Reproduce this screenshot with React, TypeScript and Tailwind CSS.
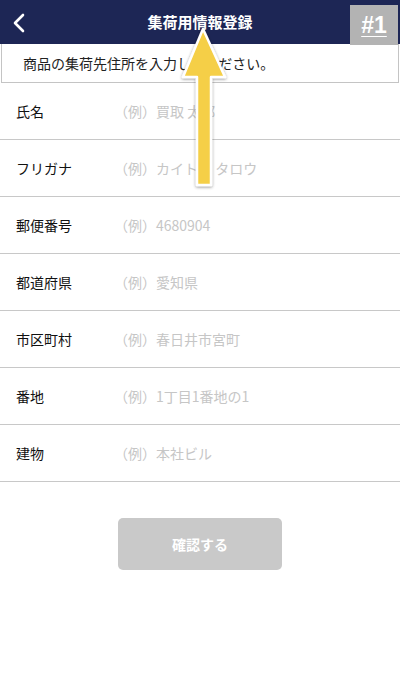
import React from 'react';

const FIELDS: { label: string; placeholder: string }[] = [
  { label: '氏名', placeholder: '（例）買取 太郎' },
  { label: 'フリガナ', placeholder: '（例）カイトリ タロウ' },
  { label: '郵便番号', placeholder: '（例）4680904' },
  { label: '都道府県', placeholder: '（例）愛知県' },
  { label: '市区町村', placeholder: '（例）春日井市宮町' },
  { label: '番地', placeholder: '（例）1丁目1番地の1' },
  { label: '建物', placeholder: '（例）本社ビル' },
];

const font = '"Noto Sans CJK JP", "Liberation Sans", sans-serif';

export default function App() {
  return (
    <div className="relative h-[694px] w-[400px] overflow-hidden bg-white" style={{ fontFamily: font }}>
      {/* Header */}
      <div className="relative flex h-[44px] items-center justify-center bg-[#1d2655]">
        <svg className="absolute left-[12px] top-[13px]" width="14" height="20" viewBox="0 0 14 20">
          <path d="M11 2 L3 10 L11 18" fill="none" stroke="white" strokeWidth="2.6" strokeLinecap="round" strokeLinejoin="round" />
        </svg>
        <h1 className="text-[15px] font-bold text-white">集荷用情報登録</h1>
      </div>

      {/* Notice */}
      <div className="mx-[1px] flex h-[39px] items-center border-x border-b border-[#c4c4c4] pl-[21px] text-[14px] text-[#222]">
        商品の集荷先住所を入力してください。
      </div>

      {/* Form rows */}
      <div className="flex flex-col">
        {FIELDS.map((f) => (
          <div key={f.label} className="flex h-[57px] items-center border-b border-[#c8c8c8]">
            <span className="w-[114px] pl-[16px] text-[14px] text-[#111]">{f.label}</span>
            <input
              readOnly
              placeholder={f.placeholder}
              className="flex-1 bg-transparent text-[14px] outline-none placeholder:text-[#c6c6c6]"
              style={{ fontFamily: font }}
            />
          </div>
        ))}
      </div>

      <div className="flex justify-center pt-[36px]">
        <button className="h-[52px] w-[164px] rounded-[5px] bg-[#c9c9c9] text-[14px] font-bold text-white">確認する</button>
      </div>

      {/* Annotation badge */}
      <div className="absolute right-[2px] top-[5px] flex h-[40px] w-[48px] items-center justify-center bg-[#b3b3b3]">
        <span className="text-[23px] font-bold leading-none text-white underline decoration-1 underline-offset-[3px]" style={{ fontFamily: '"Liberation Sans", sans-serif' }}>
          #1
        </span>
      </div>

      {/* Annotation arrow */}
      <svg className="absolute left-[178px] top-[25px]" width="54" height="168" viewBox="0 0 54 168">
        <defs>
          <filter id="sh" x="-30%" y="-10%" width="160%" height="130%">
            <feDropShadow dx="0" dy="1" stdDeviation="1.5" floodColor="#000" floodOpacity="0.45" />
          </filter>
        </defs>
        <path
          d="M25 4 L47 52 L33 52 L33 160 L19 160 L19 52 L5 52 Z"
          fill="#f5cf46"
          stroke="white"
          strokeWidth="2.5"
          strokeLinejoin="round"
          filter="url(#sh)"
        />
      </svg>
    </div>
  );
}
